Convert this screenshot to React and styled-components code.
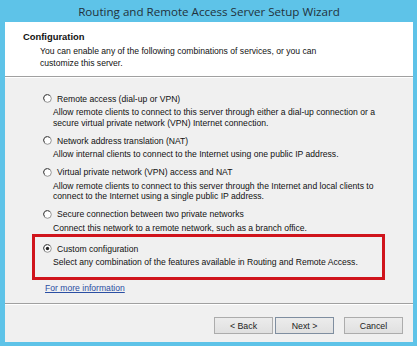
import styled, { createGlobalStyle } from 'styled-components'

const Global = createGlobalStyle`
  html, body { margin: 0; padding: 0; background: #5ec3e8; }
  body { font-family: "Liberation Sans", Arial, sans-serif; }
`

const options = [
  { label: 'Remote access (dial-up or VPN)', desc: ['Allow remote clients to connect to this server through either a dial-up connection or a', 'secure virtual private network (VPN) Internet connection.'] },
  { label: 'Network address translation (NAT)', desc: ['Allow internal clients to connect to the Internet using one public IP address.'] },
  { label: 'Virtual private network (VPN) access and NAT', desc: ['Allow remote clients to connect to this server through the Internet and local clients to', 'connect to the Internet using a single public IP address.'] },
  { label: 'Secure connection between two private networks', desc: ['Connect this network to a remote network, such as a branch office.'] },
]

function Radio({ checked }) {
  return (
    <RadioIcon width="9" height="9" viewBox="0 0 9 9">
      <circle cx="4.5" cy="4.5" r="3.8" fill="#fff" stroke="#8a8a8a" strokeWidth="0.9" />
      <path d="M1.6 6.6 A3.6 3.6 0 0 1 6.9 1.6" fill="none" stroke="#555" strokeWidth="1" />
      {checked && <circle cx="4.5" cy="4.5" r="1.7" fill="#222" />}
    </RadioIcon>
  )
}

function Option({ label, desc, checked }) {
  return (
    <OptionBlock>
      <LabelRow>
        <Radio checked={checked} />
        <span>{label}</span>
      </LabelRow>
      <Desc>
        {desc.map((d) => <div key={d}>{d}</div>)}
      </Desc>
    </OptionBlock>
  )
}

export default function App() {
  return (
    <Window>
      <Global />
      <TitleBar>Routing and Remote Access Server Setup Wizard</TitleBar>
      <Client>
        <Header>
          <h1>Configuration</h1>
          <p>You can enable any of the following combinations of services, or you can<br />customize this server.</p>
        </Header>
        <Body>
          <Options>
            {options.map((o) => <Option key={o.label} {...o} />)}
          </Options>
          <Highlight>
            <Option checked label="Custom configuration" desc={['Select any combination of the features available in Routing and Remote Access.']} />
          </Highlight>
          <MoreLink href="#">For more information</MoreLink>
        </Body>
        <Footer>
          <Button>&lt; Back</Button>
          <Button $default>Next &gt;</Button>
          <Button $gap>Cancel</Button>
        </Footer>
      </Client>
    </Window>
  )
}

const Window = styled.div`
  width: 417px;
  height: 346px;
  display: flex;
  flex-direction: column;
  background: #5ec3e8;
  box-sizing: border-box;
  padding: 0 4px 4px 5px;
`

const TitleBar = styled.div`
  height: 22px;
  line-height: 22px;
  text-align: center;
  font-family: "Open Sans", "Noto Sans", sans-serif;
  font-size: 11.6px;
  color: #22323c;
  padding-top: 1px;
  box-sizing: border-box;
`

const Client = styled.div`
  flex: 1;
  display: flex;
  flex-direction: column;
  background: #f0f0f0;
  font-size: 8.6px;
  color: #111;
`

const Header = styled.div`
  height: 55px;
  flex: none;
  background: #fff;
  border-bottom: 1px solid #a0a0a0;
  box-shadow: 0 1px 0 #fff;
  box-sizing: border-box;
  padding: 9px 0 0 18px;
  h1 {
    margin: 0;
    font-size: 9.4px;
    font-weight: bold;
    line-height: 12px;
  }
  p {
    margin: 2px 0 0 17px;
    line-height: 12px;
  }
`

const Body = styled.div`
  flex: 1;
  padding: 15px 0 0 27px;
  border-bottom: 1px solid #a0a0a0;
  box-shadow: 0 1px 0 #fff;
`

const Options = styled.div`
  display: flex;
  flex-direction: column;
  gap: 6px;
  padding-left: 11px;
`

const OptionBlock = styled.div`
  display: flex;
  flex-direction: column;
`

const LabelRow = styled.div`
  display: flex;
  align-items: center;
  gap: 5px;
  height: 13px;
`

const RadioIcon = styled.svg`
  flex: none;
`

const Desc = styled.div`
  margin-top: 2px;
  padding-left: 10px;
  line-height: 10.5px;
`

const Highlight = styled.div`
  width: 353px;
  height: 46px;
  margin-top: 1px;
  box-sizing: border-box;
  border: 3px solid #d0141c;
  padding: 5px 0 0 8px;
`

const MoreLink = styled.a`
  display: inline-block;
  margin: 3px 0 0 13px;
  color: #2b4fa3;
  text-decoration: underline;
  font-size: 8.6px;
`

const Footer = styled.div`
  height: 38px;
  flex: none;
  box-sizing: border-box;
  display: flex;
  align-items: flex-start;
  justify-content: flex-end;
  gap: 2px;
  padding: 13px 10px 0 0;
`

const Button = styled.button`
  width: 59px;
  height: 17px;
  padding: 0;
  margin-left: ${(p) => (p.$gap ? '8px' : '0')};
  background: linear-gradient(#ececec, #e0e0e0);
  border: 1px solid ${(p) => (p.$default ? '#7f8ea0' : '#acacac')};
  font-family: "Liberation Sans", Arial, sans-serif;
  font-size: 8.8px;
  color: #222;
`
